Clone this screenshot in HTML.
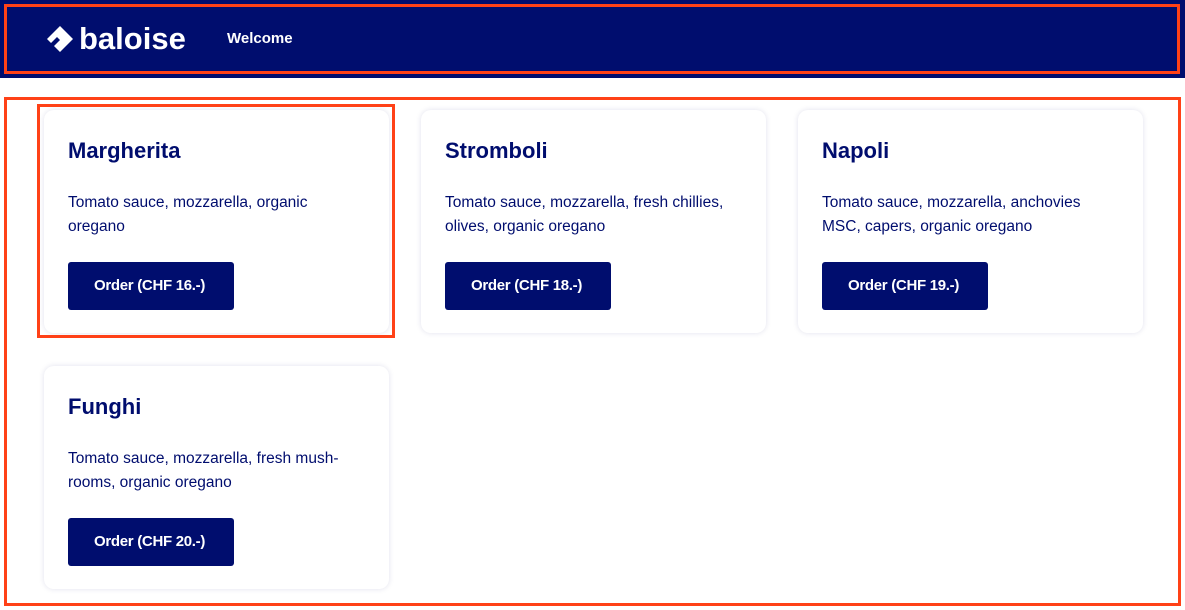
<!DOCTYPE html>
<html><head><style>
*{box-sizing:border-box;margin:0;padding:0}
body{width:1185px;height:610px;background:#fff;font-family:"Liberation Sans",sans-serif;color:#000d6e;position:relative;overflow:hidden}
.hdr{position:absolute;left:0;top:0;width:1185px;height:78px;background:#000d6e}
.ob{position:absolute;border:3px solid #ff4117}
.logo{position:absolute;left:45px;top:21px;color:#fff;font-weight:bold;font-size:31px;letter-spacing:0px;display:flex;align-items:center}
.wel{position:absolute;left:227px;top:30px;color:#fff;font-weight:bold;font-size:15px}
.card{position:absolute;width:345px;height:223px;background:#fff;border-radius:10px;box-shadow:0 0 6px rgba(0,13,110,0.12);padding:0 24px}
.card h2{position:absolute;left:24px;top:28px;font-size:22px;font-weight:bold}
.card p{position:absolute;left:24px;top:81px;width:300px;font-size:15.5px;line-height:24px}
.card .b{position:absolute;left:24px;top:152px;height:48px;background:#000d6e;color:#fff;font-weight:bold;font-size:15px;line-height:48px;padding:0 29px 0 26px;border-radius:3px;letter-spacing:-0.3px}
</style></head><body>
<div class="hdr"></div>
<div class="ob" style="left:4px;top:4px;width:1176px;height:70px"></div>
<div class="logo"><svg width="30" height="30" viewBox="0 0 30 30" style="margin-right:4px"><path d="M15 2 L28 15 L15 28 L9 22 L15 16 L12 13 L6 19 L2 15 Z" fill="#fff"/></svg>baloise</div>
<div class="wel">Welcome</div>
<div class="ob" style="left:4px;top:97px;width:1177px;height:509px"></div>
<div class="card" style="left:44px;top:110px"><h2>Margherita</h2><p>Tomato sauce, mozzarella, organic oregano</p><div class="b">Order (CHF 16.-)</div></div>
<div class="card" style="left:421px;top:110px"><h2>Stromboli</h2><p>Tomato sauce, mozzarella, fresh chillies, olives, organic oregano</p><div class="b">Order (CHF 18.-)</div></div>
<div class="card" style="left:798px;top:110px"><h2>Napoli</h2><p>Tomato sauce, mozzarella, anchovies MSC, capers, organic oregano</p><div class="b">Order (CHF 19.-)</div></div>
<div class="card" style="left:44px;top:366px"><h2>Funghi</h2><p>Tomato sauce, mozzarella, fresh mush-rooms, organic oregano</p><div class="b">Order (CHF 20.-)</div></div>
<div class="ob" style="left:37px;top:104px;width:358px;height:234px"></div>
</body></html>
